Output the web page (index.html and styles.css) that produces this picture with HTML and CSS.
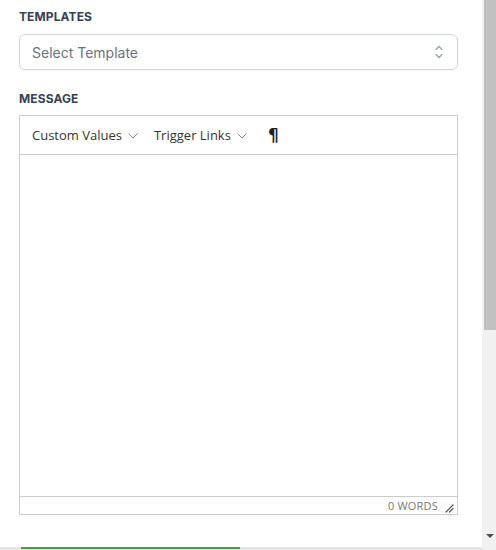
FILE: index.html
```html
<!DOCTYPE html>
<html lang="en">
<head>
  <meta charset="UTF-8">
  <meta name="viewport" content="width=device-width, initial-scale=1.0">
  <title>Message Template</title>
  <link rel="stylesheet" href="styles.css">
</head>
<body>
  <div class="panel">
    <!-- Templates -->
    <label class="field-label" for="template">Templates</label>
    <div class="select-box">
      <span class="select-text">Select Template</span>
      <svg class="select-icon" width="10" height="16" viewBox="0 0 10 16">
        <path d="M2 5.5 L5 2.5 L8 5.5" fill="none" stroke="#9ca3af" stroke-width="1.3" stroke-linecap="round" stroke-linejoin="round"/>
        <path d="M2 10.5 L5 13.5 L8 10.5" fill="none" stroke="#9ca3af" stroke-width="1.3" stroke-linecap="round" stroke-linejoin="round"/>
      </svg>
    </div>

    <!-- Message editor -->
    <div class="field-label message-label">Message</div>
    <div class="editor">
      <div class="toolbar">
        <span class="tool">Custom Values
          <svg class="caret" width="10" height="6" viewBox="0 0 10 6"><path d="M0.5 0.5 L5 5 L9.5 0.5" fill="none" stroke="#888" stroke-width="1"/></svg>
        </span>
        <span class="tool">Trigger Links
          <svg class="caret" width="10" height="6" viewBox="0 0 10 6"><path d="M0.5 0.5 L5 5 L9.5 0.5" fill="none" stroke="#888" stroke-width="1"/></svg>
        </span>
        <span class="tool pilcrow">¶</span>
      </div>
      <div class="editor-body"></div>
      <div class="editor-footer">
        <span class="word-count">0 WORDS</span>
        <svg class="resize" width="9" height="9" viewBox="0 0 9 9">
          <path d="M1 8 L8 1 M4.5 8 L8 4.5" stroke="#555" stroke-width="1.2" stroke-linecap="round"/>
        </svg>
      </div>
    </div>

    <div class="bottom-bar">
      <div class="progress"></div>
    </div>
  </div>

  <div class="scrollbar">
    <div class="thumb"></div>
    <div class="track"></div>
    <div class="arrow"></div>
  </div>
</body>
</html>
```

FILE: styles.css
```css
body {
  margin: 0;
  padding: 0;
  background-color: #fff;
  display: flex;
  height: 550px;
  overflow: hidden;
  font-family: Inter, "Noto Sans", sans-serif;
}

.panel {
  flex: 1;
  display: flex;
  flex-direction: column;
  padding: 9px 24px 0 19px;
}

.field-label {
  display: block;
  font-size: 12px;
  line-height: 16px;
  font-weight: 700;
  letter-spacing: 0.1px;
  text-transform: uppercase;
  color: #374151;
}

.message-label {
  margin-top: 21px;
}

.select-box {
  margin-top: 9px;
  height: 34px;
  border: 1px solid #d1d5db;
  border-radius: 6px;
  display: flex;
  align-items: center;
  justify-content: space-between;
  padding: 0 13px 0 12px;
  box-shadow: 0 1px 2px rgba(0, 0, 0, 0.04);
}

.select-text {
  font-size: 14px;
  color: #6b7280;
}

.select-icon {
  display: block;
}

.editor {
  margin-top: 8px;
  border: 1px solid #ccc;
  display: flex;
  flex-direction: column;
}

.toolbar {
  height: 38px;
  border-bottom: 1px solid #ccc;
  display: flex;
  align-items: center;
  padding-left: 12px;
  font-family: "Open Sans", "Noto Sans", sans-serif;
  font-size: 13px;
  color: #333;
}

.tool {
  display: flex;
  align-items: center;
  margin-right: 16px;
}

.caret {
  margin-left: 6px;
  margin-top: 1px;
}

.pilcrow {
  font-family: "DejaVu Sans", sans-serif;
  font-weight: 700;
  font-size: 17px;
  color: #222;
  margin-left: 5px;
}

.editor-body {
  height: 341px;
  border-bottom: 1px solid #ccc;
}

.editor-footer {
  height: 17px;
  display: flex;
  align-items: center;
  justify-content: flex-end;
  padding-right: 3px;
}

.word-count {
  font-family: "Open Sans", "Noto Sans", sans-serif;
  font-size: 11px;
  letter-spacing: 0.2px;
  color: #777;
  margin-right: 7px;
}

.resize {
  display: block;
  margin-top: 5px;
}

.bottom-bar {
  margin-top: auto;
  margin-left: -19px;
  margin-right: -24px;
  height: 3px;
  background-color: #e5e5e5;
  padding-left: 21px;
}

.progress {
  width: 219px;
  height: 2px;
  background-color: #43a047;
}

.scrollbar {
  width: 14px;
  display: flex;
  flex-direction: column;
  background-color: #f1f1f1;
}

.thumb {
  height: 330px;
  margin-left: 2px;
  background-color: #c1c1c1;
}

.track {
  flex: 1;
}

.arrow {
  width: 0;
  height: 0;
  margin: 0 0 12px 4px;
  border-left: 4px solid transparent;
  border-right: 4px solid transparent;
  border-top: 4px solid #505050;
}
```
